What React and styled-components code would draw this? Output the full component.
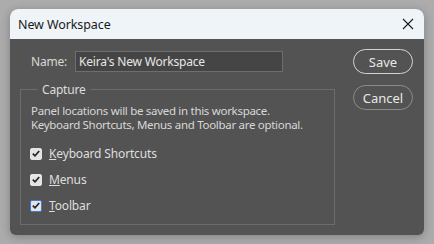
import React from 'react'
import styled, { createGlobalStyle } from 'styled-components'

const GlobalStyle = createGlobalStyle`
  html, body {
    margin: 0;
    padding: 0;
    background: #acacac;
    font-family: "Noto Sans", "Open Sans", sans-serif;
  }
  * { box-sizing: border-box; }
`

const options = [
  { id: 'kbd', key: 'K', rest: 'eyboard Shortcuts', focused: false },
  { id: 'menus', key: 'M', rest: 'enus', focused: false },
  { id: 'toolbar', key: 'T', rest: 'oolbar', focused: true },
]

export default function App() {
  return (
    <>
      <GlobalStyle />
      <Page>
        <Dialog>
          <TitleBar>
            <Title>New Workspace</Title>
            <CloseButton aria-label="Close">
              <svg width="12" height="12" viewBox="0 0 12 12">
                <path d="M1 1 L11 11 M11 1 L1 11" stroke="#1b1b1b" strokeWidth="1.1" fill="none" />
              </svg>
            </CloseButton>
          </TitleBar>
          <Body>
            <FormColumn>
              <NameRow>
                <Label>Name:</Label>
                <NameInput defaultValue="Keira's New Workspace" />
              </NameRow>
              <Group>
                <Legend>Capture</Legend>
                <Description>
                  <DescLine>Panel locations will be saved in this workspace.</DescLine>
                  <DescLine>Keyboard Shortcuts, Menus and Toolbar are optional.</DescLine>
                </Description>
                <CheckList>
                  {options.map(({ id, key, rest, focused }) => (
                    <CheckRow key={id}>
                      <CheckBox $focused={focused}>
                        <svg width="8" height="7" viewBox="0 0 8 7">
                          <path d="M0.8 3.6 L3 5.8 L7.2 1" stroke="#262626" strokeWidth="1.7" fill="none" />
                        </svg>
                      </CheckBox>
                      <CheckLabel>
                        <u>{key}</u>
                        {rest}
                      </CheckLabel>
                    </CheckRow>
                  ))}
                </CheckList>
              </Group>
            </FormColumn>
            <ButtonColumn>
              <PillButton $primary>Save</PillButton>
              <PillButton>Cancel</PillButton>
            </ButtonColumn>
          </Body>
        </Dialog>
      </Page>
    </>
  )
}

const Page = styled.div`
  width: 434px;
  height: 244px;
  padding: 9px 10px 0 10px;
`

const Dialog = styled.div`
  width: 414px;
  height: 226px;
  border-radius: 8px 8px 6px 6px;
  overflow: hidden;
  background: #535353;
  box-shadow: 0 2px 10px rgba(0, 0, 0, 0.25);
  display: flex;
  flex-direction: column;
`

const TitleBar = styled.div`
  height: 30px;
  background: #eef4f8;
  display: flex;
  align-items: center;
  justify-content: space-between;
  padding: 0 9px 0 8px;
  flex-shrink: 0;
`

const Title = styled.span`
  font-size: 12.5px;
  letter-spacing: -0.1px;
  color: #1a1a1a;
`

const CloseButton = styled.div`
  width: 14px;
  height: 14px;
  display: flex;
  align-items: center;
  justify-content: center;
`

const Body = styled.div`
  flex: 1;
  display: flex;
  padding: 10px 11px 10px 10px;
  color: #d8d8d8;
  font-size: 12px;
  letter-spacing: -0.2px;
`

const FormColumn = styled.div`
  width: 315px;
  display: flex;
  flex-direction: column;
`

const NameRow = styled.div`
  display: flex;
  align-items: center;
  padding-left: 11px;
  gap: 8px;
  height: 22px;
  margin-top: 1px;
`

const Label = styled.span`
  font-size: 12px;
  color: #d8d8d8;
`

const NameInput = styled.input`
  width: 208px;
  height: 21px;
  background: #454545;
  border: 1px solid #6e6e6e;
  color: #e6e6e6;
  font-family: inherit;
  font-size: 12px;
  letter-spacing: -0.2px;
  padding: 0 3px;
  outline: none;
`

const Group = styled.fieldset`
  margin: 9px 0 0 0;
  padding: 6px 10px 10px 9px;
  border: 1px solid #6c6c6c;
  flex: 1;
  min-width: 0;
`

const Legend = styled.legend`
  margin-left: 8px;
  padding: 0 4px;
  font-size: 12px;
  color: #dcdcdc;
`

const Description = styled.div`
  display: flex;
  flex-direction: column;
  padding-left: 1px;
`

const DescLine = styled.span`
  font-size: 11.5px;
  line-height: 14px;
  height: 14px;
  letter-spacing: -0.3px;
  white-space: nowrap;
`

const CheckList = styled.div`
  display: flex;
  flex-direction: column;
  gap: 13px;
  margin-top: 15px;
`

const CheckRow = styled.div`
  display: flex;
  align-items: center;
  gap: 7px;
  height: 13px;
`

const CheckBox = styled.span`
  width: 12px;
  height: 12px;
  border-radius: 2px;
  background: #e4e4e4;
  border: 1px solid ${(p) => (p.$focused ? '#3d7be0' : '#e4e4e4')};
  display: flex;
  align-items: center;
  justify-content: center;
`

const CheckLabel = styled.span`
  font-size: 12px;
  letter-spacing: -0.15px;
  color: #dedede;
`

const ButtonColumn = styled.div`
  flex: 1;
  display: flex;
  flex-direction: column;
  align-items: flex-end;
  gap: 11px;
`

const PillButton = styled.button`
  width: 60px;
  height: 25px;
  border-radius: 13px;
  background: transparent;
  border: ${(p) => (p.$primary ? '1.5px solid #d4d4d4' : '1px solid #8c8c8c')};
  color: #e8e8e8;
  font-family: "Noto Sans", "Open Sans", sans-serif;
  font-size: 13px;
  padding: 0;
`
